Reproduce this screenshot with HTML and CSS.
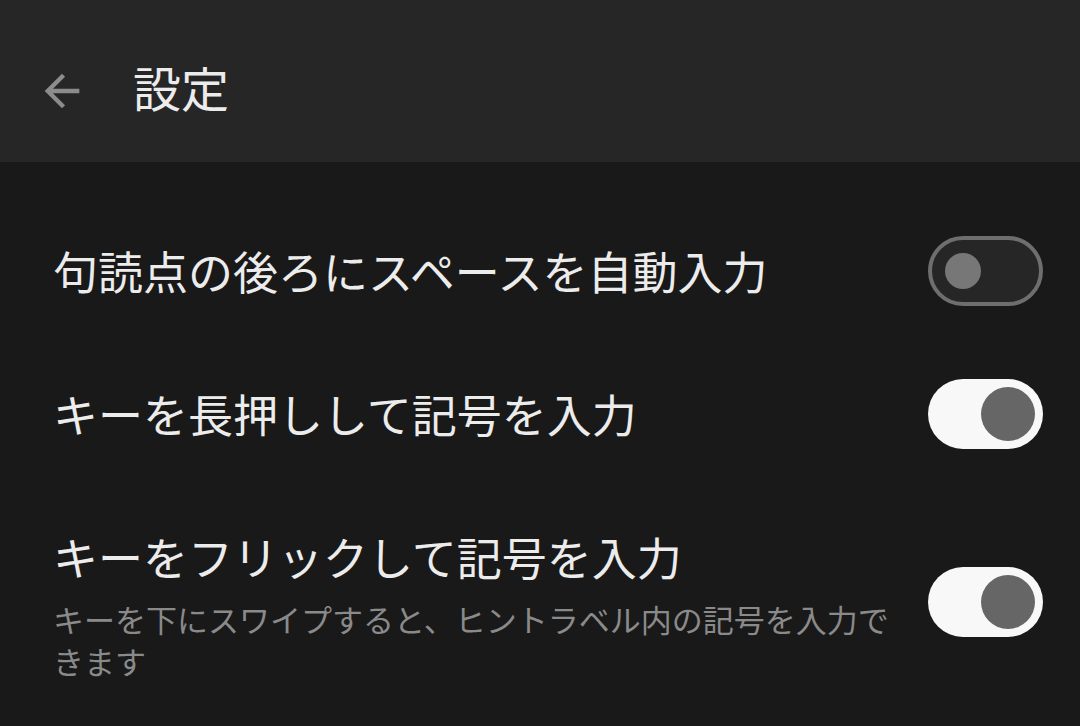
FILE: index.html
```html
<!DOCTYPE html>
<html lang="ja">

<head>
    <meta charset="UTF-8">
    <meta name="viewport" content="width=device-width, initial-scale=1.0">
    <title>設定</title>
    <link rel="stylesheet" href="styles.css">
</head>

<body>

    <header class="app-bar">
        <button class="back-btn" aria-label="戻る">
            <svg viewBox="0 0 24 24" width="52" height="52">
                <path d="M20 11H7.83l5.59-5.59L12 4l-8 8 8 8 1.41-1.41L7.83 13H20v-2z" fill="#8c8c8c" />
            </svg>
        </button>
        <h1>設定</h1>
    </header>

    <ul class="settings">
        <li class="setting">
            <div class="setting-text">
                <p class="setting-title">句読点の後ろにスペースを自動入力</p>
            </div>
            <span class="switch"><span class="thumb"></span></span>
        </li>
        <li class="setting">
            <div class="setting-text">
                <p class="setting-title">キーを長押しして記号を入力</p>
            </div>
            <span class="switch on"><span class="thumb"></span></span>
        </li>
        <li class="setting">
            <div class="setting-text">
                <p class="setting-title">キーをフリックして記号を入力</p>
                <p class="setting-sub">キーを下にスワイプすると、ヒントラベル内の記号を入力できます</p>
            </div>
            <span class="switch on"><span class="thumb"></span></span>
        </li>
    </ul>

</body>

</html>
```

FILE: styles.css
```css
body {
    font-family: "Noto Sans CJK JP", "Noto Sans", sans-serif;
    background-color: #191919;
    color: #ececec;
    margin: 0;
    padding: 0;
}

.app-bar {
    display: flex;
    align-items: center;
    height: 162px;
    background-color: #262626;
    box-sizing: border-box;
    padding: 20px 0 0 36px;
}

.back-btn {
    width: 52px;
    height: 52px;
    padding: 0;
    border: 0;
    background: none;
    display: flex;
    margin-right: 45px;
}

.app-bar h1 {
    margin: 0 0 10px;
    font-size: 48px;
    font-weight: 400;
    line-height: 1;
    color: #ececec;
}

.settings {
    list-style: none;
    margin: 0;
    padding: 37px 0 0;
}

.setting {
    display: flex;
    align-items: center;
    gap: 32px;
    padding: 36.5px 37px 36.5px 53px;
}

.setting-text {
    flex: 1;
    min-width: 0;
}

.setting-title {
    margin: 0;
    font-size: 45px;
    line-height: 70px;
    color: #ececec;
}

.setting-sub {
    margin: 6px 0 0;
    font-size: 31px;
    line-height: 42px;
    color: #8a8a8a;
}

/* toggle switch */
.switch {
    flex: none;
    display: flex;
    align-items: center;
    width: 115px;
    height: 70px;
    box-sizing: border-box;
    border-radius: 35px;
    border: 4px solid #6e6e6e;
    background-color: #262626;
    padding-left: 13px;
}

.switch .thumb {
    width: 36px;
    height: 36px;
    border-radius: 50%;
    background-color: #777;
}

.switch.on {
    border: 0;
    background-color: #f8f8f8;
    justify-content: flex-end;
    padding: 0 8px 0 0;
}

.switch.on .thumb {
    width: 54px;
    height: 54px;
    background-color: #666;
}
```
